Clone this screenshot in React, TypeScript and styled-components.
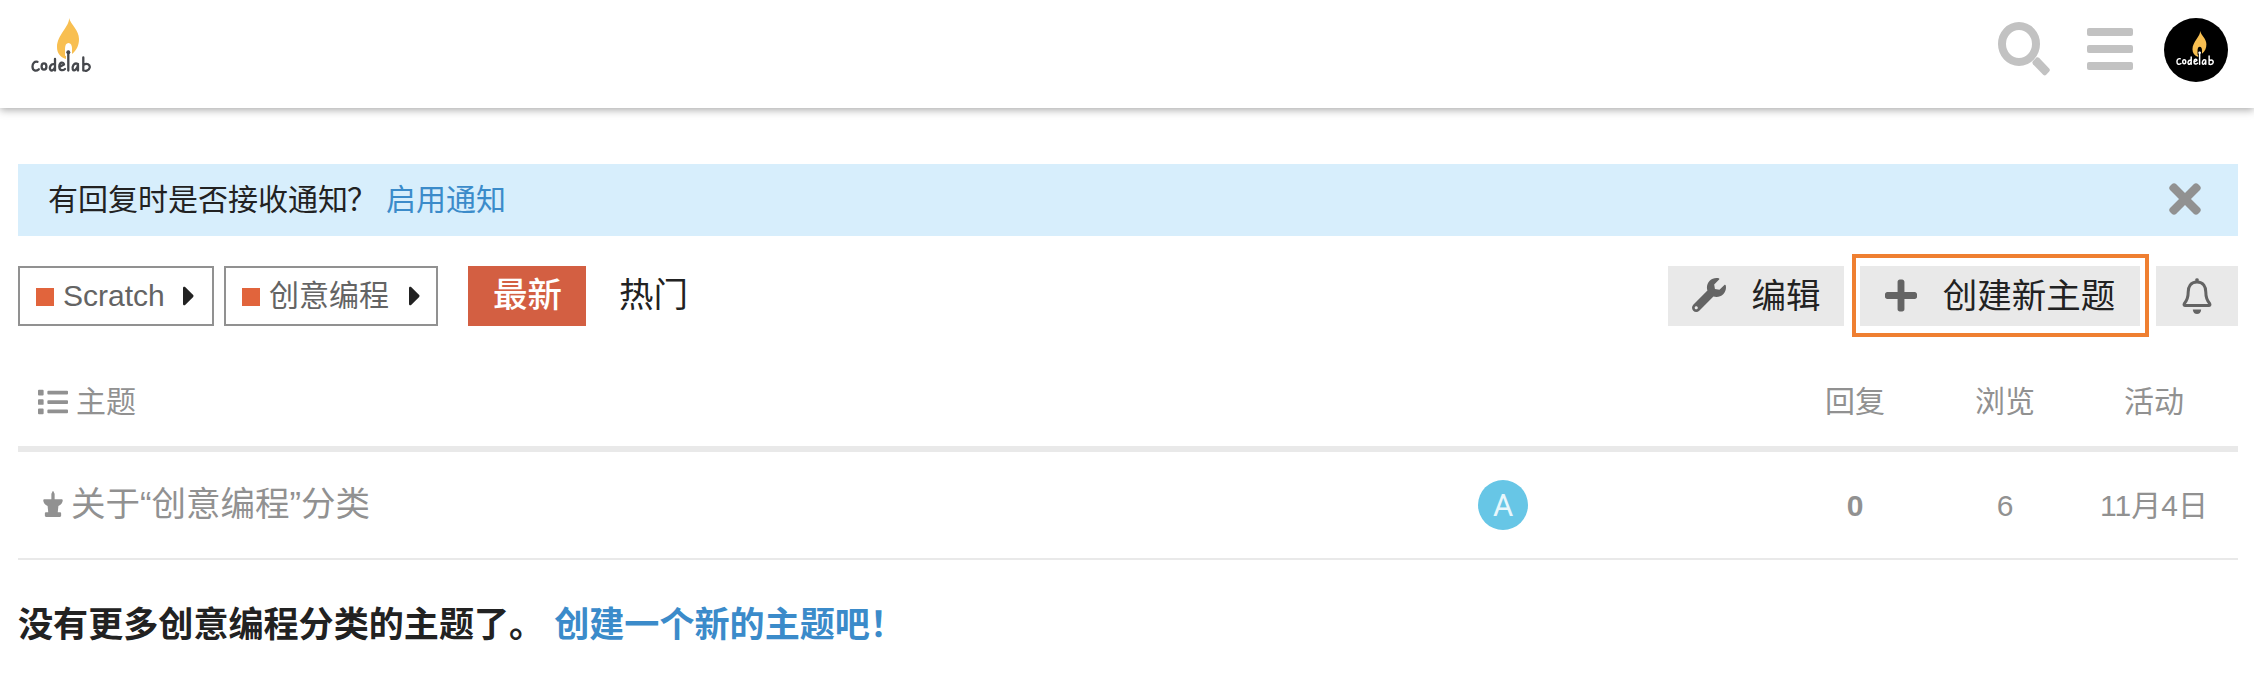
import React from "react";
import styled, { createGlobalStyle } from "styled-components";
import { FaTimes, FaWrench, FaPlus, FaList, FaThumbtack, FaCaretRight } from "react-icons/fa";

const GlobalStyle = createGlobalStyle`
  * { box-sizing: border-box; }
  body {
    margin: 0;
    background: #fff;
    color: #222;
    font: 30px/42px "Liberation Sans", "Noto Sans CJK SC", sans-serif;
  }
  svg { display: block; flex: none; }
`;

const Header = styled.header`
  height: 108px;
  padding: 18px 26px 0 31px;
  display: flex;
  align-items: flex-start;
  justify-content: space-between;
  box-shadow: 0 2px 8px rgba(0, 0, 0, 0.34);
`;

const HeaderIcons = styled.div`
  display: flex;
  align-items: flex-start;
  color: #c2c2c2;
`;

const SearchIcon = styled.svg`
  width: 53px;
  height: 55px;
  margin: 4px 36px 0 0;
`;

const MenuIcon = styled.svg`
  width: 46px;
  height: 42px;
  margin: 10px 31px 0 0;
`;

const UserAvatar = styled.div`
  width: 64px;
  height: 64px;
  padding: 13px 2px 0 0;
  border-radius: 50%;
  background: #000;
  display: flex;
  align-items: flex-start;
  justify-content: center;
`;

const Main = styled.main`
  padding: 56px 16px 0 18px;
`;

const Banner = styled.div`
  height: 72px;
  padding: 0 36px 0 30px;
  background: #d7eefc;
  display: flex;
  align-items: center;
`;

const QuestionMark = styled.span`
  margin-left: -1px;
`;

const Link = styled.a`
  color: #3b8bca;
  text-decoration: none;
`;

const BannerLink = styled(Link)`
  margin-left: 9px;
`;

const CloseIcon = styled(FaTimes)`
  width: 34px;
  height: 46px;
  margin: 0 0 2px auto;
  color: #919191;
`;

const Nav = styled.nav`
  height: 60px;
  margin-top: 30px;
  display: flex;
  align-items: center;
`;

const CategoryDrop = styled.div<{ $width: number; $padRight: number }>`
  width: ${(p) => p.$width}px;
  height: 60px;
  margin-right: 10px;
  padding: 0 ${(p) => p.$padRight}px 0 16px;
  border: 2px solid #919191;
  color: #646464;
  display: flex;
  align-items: center;
`;

const CategoryBadge = styled.span`
  width: 18px;
  height: 18px;
  margin: 2px 9px 0 0;
  background: #e1643c;
`;

const DropArrow = styled(FaCaretRight)`
  width: 12px;
  height: 32px;
  margin-left: auto;
  color: #222;
`;

const NavPill = styled.a<{ $active?: boolean }>`
  width: ${(p) => (p.$active ? "118px" : "auto")};
  height: 60px;
  padding-left: ${(p) => (p.$active ? 25 : 33)}px;
  margin-left: ${(p) => (p.$active ? 20 : 0)}px;
  background: ${(p) => (p.$active ? "#d35f42" : "transparent")};
  color: ${(p) => (p.$active ? "#fff" : "#222")};
  font-size: 34.5px;
  font-weight: ${(p) => (p.$active ? 500 : 400)};
  line-height: 58px;
`;

const Actions = styled.div`
  height: 60px;
  margin-left: auto;
  display: flex;
`;

const Button = styled.button<{ $width: number }>`
  width: ${(p) => p.$width}px;
  height: 60px;
  padding: 0;
  border: 0;
  background: #e9e9e9;
  color: #222;
  font: inherit;
  font-size: 34.5px;
  display: flex;
  align-items: center;
  justify-content: center;
  svg { color: #646464; }
`;

const ButtonLabel = styled.span`
  margin-left: 26px;
`;

const PlusIcon = styled(FaPlus)`
  width: 32px;
  height: 37px;
  margin-bottom: 2px;
`;

const WrenchIcon = styled(FaWrench)`
  width: 34px;
  height: 34px;
  margin-bottom: 2px;
`;

const Highlight = styled.div`
  margin: -12px 7px -11px 8px;
  padding: 8px 5px 7px 4px;
  height: 83px;
  border: 4px solid #ef7f31;
`;

const ListHeader = styled.div`
  display: flex;
  align-items: center;
  height: 126px;
  padding-top: 31px;
  border-bottom: 6px solid #e9e9e9;
  color: #919191;
`;

const TopicRow = styled.div`
  display: flex;
  align-items: center;
  height: 108px;
  border-bottom: 2px solid #e9e9e9;
  color: #919191;
`;

const TitleCell = styled.div<{ $indent: number }>`
  flex: 1;
  display: flex;
  align-items: center;
  padding-left: ${(p) => p.$indent}px;
`;

const ListIcon = styled(FaList)`
  width: 30px;
  height: 30px;
  margin-right: 8px;
`;

const PinIcon = styled(FaThumbtack)`
  width: 20px;
  height: 26px;
  margin: 0 8px 2px 0;
  transform: rotate(180deg);
`;

const Title = styled.span`
  margin-top: -2px;
  font-size: 34.5px;
`;

const Quote = styled.span`
  font-family: "Liberation Sans", sans-serif;
`;

const Posters = styled.div`
  width: 302px;
`;

const Poster = styled.div`
  width: 50px;
  height: 50px;
  border-radius: 50%;
  background: #67c6e6;
  color: #e8f7fc;
  font: 31px/51px Roboto, sans-serif;
  text-align: center;
`;

const NumberCell = styled.div<{ $bold?: boolean }>`
  width: 150px;
  padding-top: 1px;
  font-weight: ${(p) => (p.$bold ? 700 : 400)};
  text-align: center;
`;

const ActivityCell = styled(NumberCell)`
  width: 148px;
  margin-right: 10px;
  white-space: nowrap;
`;

const Footer = styled.h3`
  margin: 43px 0 0;
  font-size: 35.1px;
  line-height: 44px;
  font-weight: 700;
`;

const FooterLink = styled(Link)`
  margin-left: 10px;
`;

function CodelabLogo({ width, ink, hole }: { width: number; ink: string; hole: string }) {
  return (
    <svg width={width} height={(width * 55) / 60} viewBox="0 0 60 55">
      <path d="M38 0C39 8 26 17 26 29C26 35 29 39 35 41L35 30Q38 22 41 31L41 36C46 32 48 27 48 21C48 12 40 7 38 0Z" fill="#f8bf51" />
      <path d="M34 38V31Q34 25 37.5 25Q41 25 41 31V36Z" fill={hole} />
      <g fill="none" stroke={ink} strokeWidth="2.3" strokeLinecap="round" strokeLinejoin="round">
        <path d="M6.5 43.8C3.5 43 1.5 45.5 1.5 48.5C1.5 53 5 53.5 7.8 51.3" />
        <ellipse cx="13" cy="48.5" rx="2.4" ry="3.2" />
        <path d="M24 41V52.5M24 46.5C19.5 45 18 50 19.5 52C21 53.5 23.5 51 24 49" />
        <path d="M28.5 49L33 46.5C32.5 43.5 28.5 44 28.3 48.5C28.3 53 32 52.8 34 51" />
        <path d="M37.3 34V52.5" />
        <path d="M47 46C42.5 44 41 49 41.8 51.5C43 54 46.5 51 47 47V52.5" />
        <path d="M52.3 39.5V52.5M52.3 47C56 44.5 59.2 46.5 58.7 49.5C58 53 54 53.5 52.3 52" />
      </g>
      <circle cx="37.3" cy="34.3" r="2" fill={ink} />
    </svg>
  );
}

function BellIcon() {
  return (
    <svg width="30" height="38" viewBox="0 0 30 38">
      <path d="M13.3 4V2.6Q13.3 1.2 15 1.2Q16.7 1.2 16.7 2.6V4Z" fill="currentColor" />
      <path
        d="M15 5C8.5 5 6.2 10 6.2 15C6.2 21 5 23.5 2.4 26.4Q1.4 28.3 3 28.5H27Q28.6 28.3 27.6 26.4C25 23.5 23.8 21 23.8 15C23.8 10 21.5 5 15 5Z"
        fill="none"
        stroke="currentColor"
        strokeWidth="3"
      />
      <path d="M10.8 32.5H19.2C19 35.6 17.2 37 15 37S11 35.6 10.8 32.5Z" fill="currentColor" />
    </svg>
  );
}

export default function App() {
  return (
    <>
      <GlobalStyle />
      <Header>
        <CodelabLogo width={60} ink="#45474c" hole="#fff" />
        <HeaderIcons>
          <SearchIcon viewBox="0 0 53 55">
            <ellipse cx="21" cy="22" rx="17" ry="18" fill="none" stroke="currentColor" strokeWidth="8" />
            <path d="M34.8 39.2L38.7 35.3Q40 35 41 35.8L51.2 46.4Q52.5 48 51.2 49.5L48.2 52.8Q46.8 54 45.2 52.8L35 42.2Q33.8 40.6 34.8 39.2Z" fill="currentColor" />
          </SearchIcon>
          <MenuIcon viewBox="0 0 46 42" fill="currentColor">
            <rect width="46" height="8" rx="2" />
            <rect y="17" width="46" height="8" rx="2" />
            <rect y="34" width="46" height="8" rx="2" />
          </MenuIcon>
          <UserAvatar>
            <CodelabLogo width={38} ink="#fff" hole="#000" />
          </UserAvatar>
        </HeaderIcons>
      </Header>
      <Main>
        <Banner>
          <span>有回复时是否接收通知</span>
          <QuestionMark>？</QuestionMark>
          <BannerLink>启用通知</BannerLink>
          <CloseIcon />
        </Banner>
        <Nav>
          <CategoryDrop $width={196} $padRight={17}>
            <CategoryBadge />
            Scratch
            <DropArrow />
          </CategoryDrop>
          <CategoryDrop $width={214} $padRight={15}>
            <CategoryBadge />
            创意编程
            <DropArrow />
          </CategoryDrop>
          <NavPill $active>最新</NavPill>
          <NavPill>热门</NavPill>
          <Actions>
            <Button $width={176}>
              <WrenchIcon />
              <ButtonLabel>编辑</ButtonLabel>
            </Button>
            <Highlight>
              <Button $width={280}>
                <PlusIcon />
                <ButtonLabel>创建新主题</ButtonLabel>
              </Button>
            </Highlight>
            <Button $width={82}>
              <BellIcon />
            </Button>
          </Actions>
        </Nav>
        <ListHeader>
          <TitleCell $indent={20}>
            <ListIcon />
            主题
          </TitleCell>
          <NumberCell>回复</NumberCell>
          <NumberCell>浏览</NumberCell>
          <ActivityCell>活动</ActivityCell>
        </ListHeader>
        <TopicRow>
          <TitleCell $indent={25}>
            <PinIcon />
            <Title>
              关于<Quote>“</Quote>创意编程<Quote>”</Quote>分类
            </Title>
          </TitleCell>
          <Posters>
            <Poster>A</Poster>
          </Posters>
          <NumberCell $bold>0</NumberCell>
          <NumberCell>6</NumberCell>
          <ActivityCell>11月4日</ActivityCell>
        </TopicRow>
        <Footer>
          没有更多创意编程分类的主题了。
          <FooterLink>创建一个新的主题吧！</FooterLink>
        </Footer>
      </Main>
    </>
  );
}
